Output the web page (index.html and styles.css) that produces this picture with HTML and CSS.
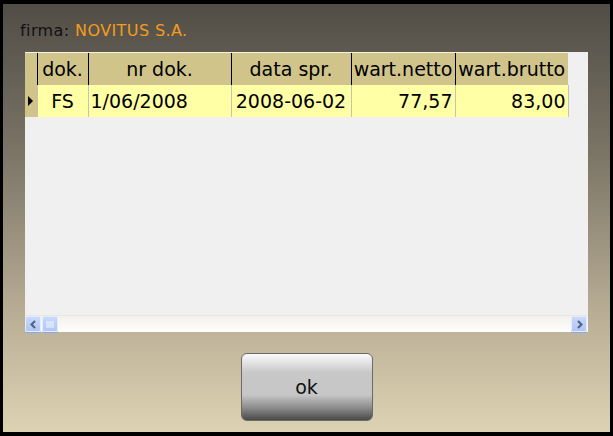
FILE: index.html
```html
<!DOCTYPE html>
<html lang="pl">
<head>
  <meta charset="UTF-8">
  <title>Dokumenty</title>
  <link rel="stylesheet" href="styles.css">
</head>
<body>
  <div class="frame">
    <div class="title">firma: <span class="company">NOVITUS S.A.</span></div>

    <div class="grid">
      <table class="docs">
        <colgroup>
          <col class="c-ind">
          <col class="c-dok">
          <col class="c-nr">
          <col class="c-data">
          <col class="c-netto">
          <col class="c-brutto">
        </colgroup>
        <thead>
          <tr>
            <th class="ind"></th>
            <th>dok.</th>
            <th>nr dok.</th>
            <th>data spr.</th>
            <th>wart.netto</th>
            <th>wart.brutto</th>
          </tr>
        </thead>
        <tbody>
          <tr>
            <td class="ind"><span class="arrow"></span></td>
            <td class="center">FS</td>
            <td>1/06/2008</td>
            <td class="center">2008-06-02</td>
            <td class="num">77,57</td>
            <td class="num">83,00</td>
          </tr>
        </tbody>
      </table>

      <div class="hscroll">
        <div class="sbtn">
          <svg width="9" height="9" viewBox="0 0 9 9"><path d="M6 1 L2.5 4.5 L6 8" fill="none" stroke="#4d6185" stroke-width="2"/></svg>
        </div>
        <div class="sbtn thumb">
          <svg width="9" height="7" viewBox="0 0 9 7"><path d="M1 0v7M3 0v7M5 0v7M7 0v7" stroke="#f4f7ff" stroke-width="1"/></svg>
        </div>
        <div class="track"></div>
        <div class="sbtn">
          <svg width="9" height="9" viewBox="0 0 9 9"><path d="M3 1 L6.5 4.5 L3 8" fill="none" stroke="#4d6185" stroke-width="2"/></svg>
        </div>
      </div>
    </div>

    <div class="actions">
      <button class="ok-btn">ok</button>
    </div>
  </div>
</body>
</html>
```

FILE: styles.css
```css
/* Okno */
html, body {
  margin: 0;
  padding: 0;
  background: #000;
}
body {
  width: 613px;
  height: 436px;
  overflow: hidden;
}
.frame {
  box-sizing: border-box;
  width: 613px;
  height: 436px;
  border-style: solid;
  border-color: #000;
  border-width: 4px 3px 4px 3px;
  background: linear-gradient(to bottom, #514d46 0%, #7b7566 35%, #bdb198 75%, #ddd3b3 100%);
  padding: 19px 22px 0 22px;
  font-family: "DejaVu Sans", Verdana, sans-serif;
}
.title {
  margin-left: -5px;
  height: 29px;
  font-size: 16px;
  line-height: 16px;
  letter-spacing: 0.4px;
  color: #111;
}
.company {
  color: #f49c1b;
}

/* Tabela */
.grid {
  width: 563px;
  height: 280px;
  background: #f0f0f0;
  display: flex;
  flex-direction: column;
  justify-content: space-between;
}
.docs {
  border-collapse: collapse;
  table-layout: fixed;
  width: 543px;
  font-size: 19px;
}
.c-ind { width: 12px; }
.c-dok { width: 51px; }
.c-nr { width: 143px; }
.c-data { width: 120px; }
.c-netto { width: 104px; }
.c-brutto { width: 113px; }

.docs th {
  height: 32px;
  padding: 0;
  background: #d0c48b;
  font-weight: normal;
  color: #000;
  border-left: 1px solid #000;
  border-top: 1px solid #f6f2e0;
  white-space: nowrap;
  overflow: hidden;
}
.docs td {
  height: 32px;
  padding: 0 2px;
  background: #ffffa6;
  border-left: 1px solid #c4c4b0;
  white-space: nowrap;
  overflow: hidden;
}
.docs td.ind, .docs th.ind {
  padding: 0;
  background: #d0c48b;
  border: none;
}
.docs td:last-child {
  border-right: 1px solid #c4c4b0;
}
.arrow {
  display: block;
  width: 0;
  height: 0;
  margin-left: 3px;
  border-top: 5px solid transparent;
  border-bottom: 5px solid transparent;
  border-left: 5px solid #000;
}
.center { text-align: center; }
.num { text-align: right; }

/* Pasek przewijania */
.hscroll {
  display: flex;
  height: 16px;
  background: linear-gradient(to bottom, #f2f1ec, #fefefe);
  border-top: 1px solid #e8e6e0;
}
.sbtn {
  box-sizing: border-box;
  width: 16px;
  height: 16px;
  margin-right: 1px;
  border: 1px solid #e4ecfc;
  border-radius: 2px;
  background: linear-gradient(to bottom, #c9d8fc, #b0c6f6);
  box-shadow: 0 1px 0 #8aa8e8;
  display: flex;
  align-items: center;
  justify-content: center;
}
.track {
  flex: 1;
}

/* Przycisk */
.actions {
  display: flex;
  justify-content: center;
  padding-top: 21px;
}
.ok-btn {
  width: 132px;
  height: 68px;
  border: 1px solid #6a6a6a;
  border-radius: 6px;
  background: linear-gradient(to bottom, #fafafa 0%, #c8c8c8 28%, #c6c6c6 62%, #8a8a8a 82%, #4a4a4a 100%);
  font-family: "DejaVu Sans", Verdana, sans-serif;
  font-size: 19px;
  color: #111;
  cursor: pointer;
}
```
